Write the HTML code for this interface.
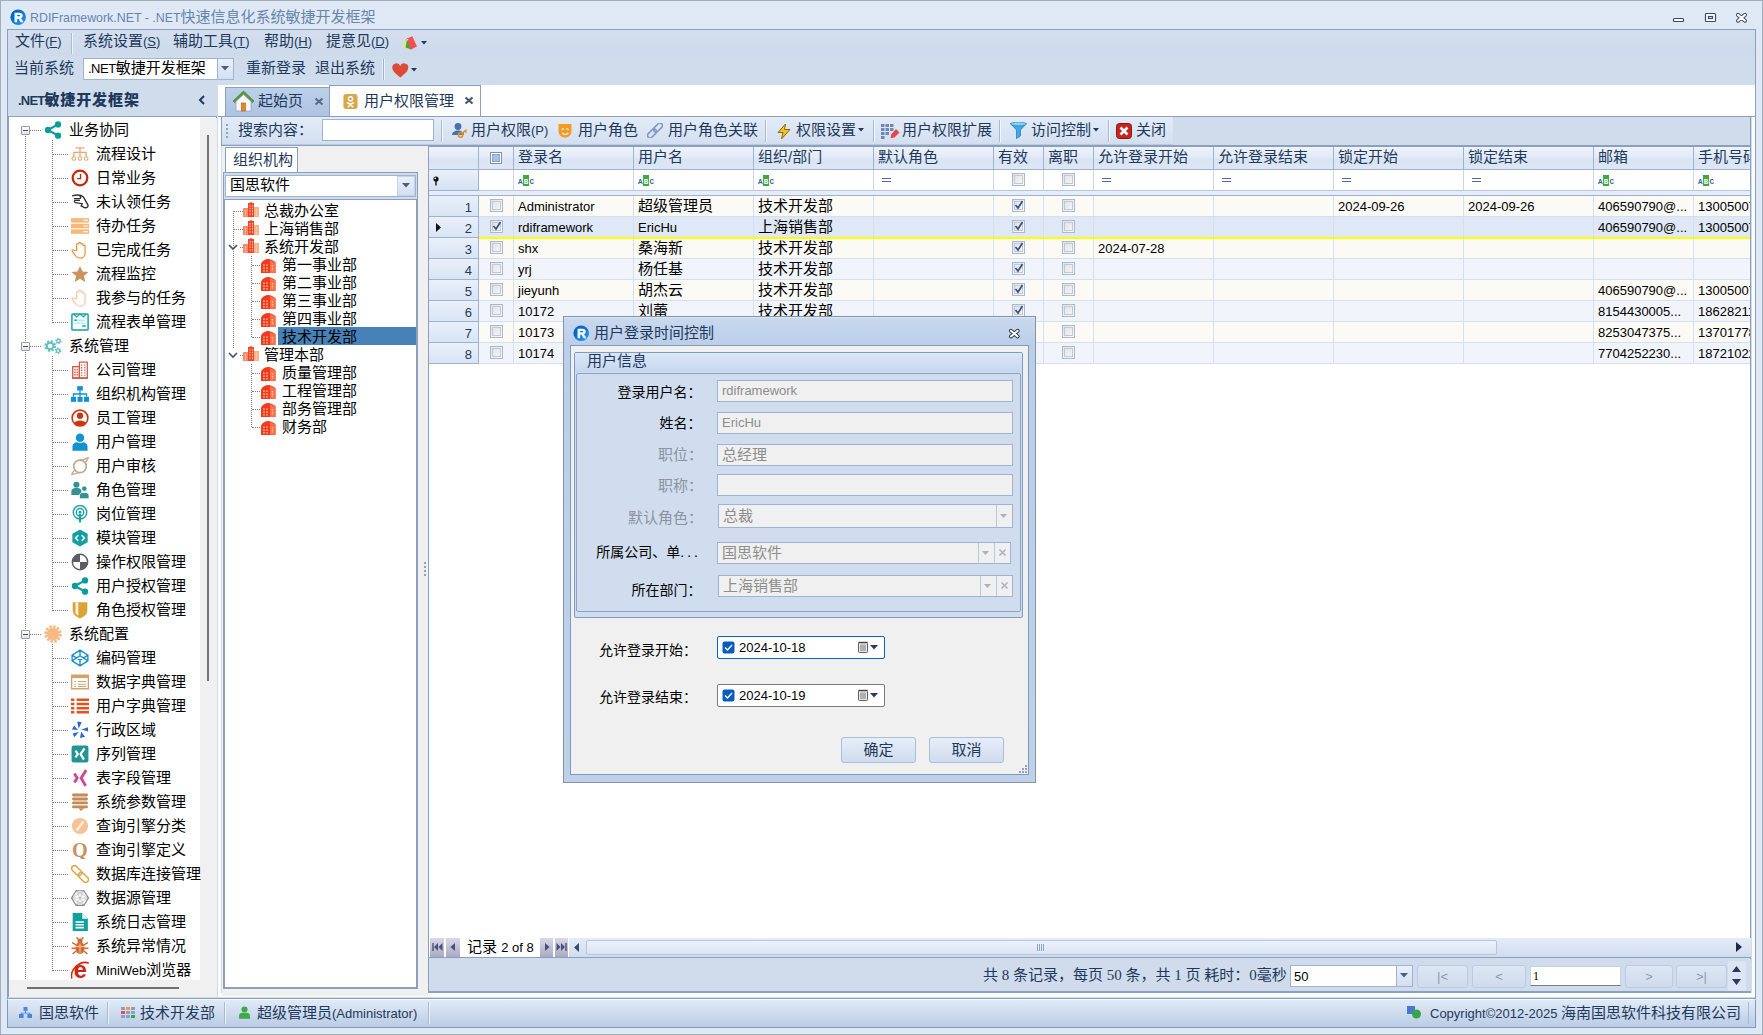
<!DOCTYPE html><html lang="zh-CN"><head><meta charset="utf-8"><title>RDIFramework.NET</title><style>
*{box-sizing:border-box;margin:0;padding:0}
html,body{width:1763px;height:1035px;overflow:hidden;background:#dfe9f5}
body{position:relative;font-family:"Liberation Sans","Noto Sans CJK SC",sans-serif;font-size:15px;color:#000;font-weight:400;line-height:1}
.a{position:absolute}
.t{position:absolute;white-space:nowrap;line-height:20px;height:20px}
.l{font-size:13px;font-weight:400}
.nv{color:#1e395b}
.ic{position:absolute;width:16px;height:16px}
.hd{position:absolute;top:1px;height:23px;border-right:1px solid #9db3d3;border-bottom:1px solid #9db3d3;background:linear-gradient(#eef3fb,#e3ebf8 45%,#d9e4f4 55%,#dde7f5);color:#1e395b;padding-left:4px;line-height:19px;white-space:nowrap;overflow:hidden}
.fc{position:absolute;top:24px;height:21px;border-right:1px solid #c9d7ea;border-bottom:1px solid #b5c7e0;background:#fff}
.c{position:absolute;height:21px;border-right:1px solid #d4dff0;border-bottom:1px solid #d4dff0;padding-left:4px;line-height:20px;white-space:nowrap;overflow:hidden}
.cb{position:absolute;width:13px;height:13px;border:1px solid #a9b9d3;background:linear-gradient(135deg,#dfe3e8,#fbfbfb);}
.cb i{position:absolute;left:1px;top:1px;width:9px;height:9px;border:1px solid #c3c9d3;background:linear-gradient(135deg,#e4e4e6,#f4f4f4)}
.dl{position:absolute;border-left:1px dotted #808080;width:0}
.dh{position:absolute;border-top:1px dotted #808080;height:0}
.inp{position:absolute;border:1px solid #9fb4d2;background:#f0f0f0;color:#8d8d8d;padding-left:4px;line-height:20px;white-space:nowrap;overflow:hidden}
.lab{position:absolute;text-align:right;white-space:nowrap;line-height:20px;height:20px}
.btn{position:absolute;border:1px solid #a9bfdc;border-radius:3px;background:linear-gradient(#e6eef9,#cfdcee);color:#1e395b;text-align:center}
</style></head><body>
<div class="a" style="left:0px;top:0px;width:1763px;height:1035px;border:1px solid #a2adbb;background:#dfe9f5"></div>
<svg class="a" style="left:9.7px;top:9px;" width="16.4" height="16.4" viewBox="0 0 16 16"><defs><linearGradient id="rg99" x1="0" y1="0" x2="1" y2="1"><stop offset="0" stop-color="#0058b0"/><stop offset=".55" stop-color="#0a78d8"/><stop offset="1" stop-color="#2aa8ff"/></linearGradient></defs><circle cx="8" cy="8" r="7.6" fill="url(#rg99)"/><text x="8.2" y="12.4" font-family="Liberation Sans,sans-serif" font-weight="700" font-size="12" fill="#fff" stroke="#fff" stroke-width=".5" text-anchor="middle">R</text></svg>
<div class="t " style="left:30px;top:7px;color:#6784ad;font-weight:400;font-size:15px"><span style="font-size:12.4px">RDIFramework.NET - .NET</span>快速信息化系统敏捷开发框架</div>
<svg class="a" style="left:1672px;top:13.5px;" width="16" height="12" viewBox="0 0 16 12"><rect x="1.5" y="4.5" width="10" height="3" rx="1" fill="#fff" stroke="#3c4a63" stroke-width="1.200"/></svg>
<svg class="a" style="left:1704px;top:12px;" width="16" height="14" viewBox="0 0 16 14"><rect x="1.5" y="1.5" width="10" height="8" rx="1" fill="#fff" stroke="#3c4a63" stroke-width="1.200"/><rect x="4.5" y="4.5" width="4" height="2" fill="#fff" stroke="#3c4a63" stroke-width="1.200"/></svg>
<svg class="a" style="left:1734px;top:11px;" width="16" height="14" viewBox="0 0 16 14"><path d="M4 3.900l7 5.800M11 3.900l-7 5.800" stroke="#3c4a63" stroke-width="4" stroke-linecap="round"/><path d="M4 3.900l7 5.800M11 3.900l-7 5.800" stroke="#fff" stroke-width="2.100" stroke-linecap="round"/></svg>
<div class="a" style="left:7px;top:29px;width:1749px;height:970px;border:1px solid #8ba0bc;background:#cfdcec"></div>
<div class="a" style="left:8px;top:30px;width:1747px;height:26px;background:linear-gradient(#d3dfee,#cddaeb)"></div>
<div class="t nv" style="left:15px;top:31px;font-weight:400">文件<span class="l">(<u>F</u>)</span></div>
<div class="t nv" style="left:83px;top:31px;font-weight:400">系统设置<span class="l">(<u>S</u>)</span></div>
<div class="t nv" style="left:173px;top:31px;font-weight:400">辅助工具<span class="l">(<u>T</u>)</span></div>
<div class="t nv" style="left:264px;top:31px;font-weight:400">帮助<span class="l">(<u>H</u>)</span></div>
<div class="t nv" style="left:326px;top:31px;font-weight:400">提意见<span class="l">(<u>D</u>)</span></div>
<div class="a" style="left:71px;top:33px;width:1px;height:21px;background:#a7b9d3"></div>
<div class="a" style="left:72px;top:33px;width:1px;height:21px;background:#eef3fa"></div>
<svg class="a" style="left:402px;top:36px;" width="16" height="14" viewBox="0 0 16 14"><path d="M4 2.500L.7 11l6.800 2.500z" fill="#e3e970"/><path d="M5.200 1.500L3.600 11.500l6.400 2.200z" fill="#3aa848"/><path d="M4.300 2.800L10.300.3l4.700 10.200-6.300 2.900z" fill="#ef5350"/><circle cx="5.600" cy="3.700" r=".7" fill="#fff"/></svg>
<svg class="a" style="left:421px;top:40.5px;" width="7" height="5" viewBox="0 0 7 5"><path d="M0 0h6L3 3.500z" fill="#1e395b"/></svg>
<div class="t nv" style="left:14px;top:58px;font-weight:400">当前系统</div>
<div class="a" style="left:83px;top:58px;width:151px;height:22px;border:1px solid #9fb4d2;background:#fff"></div>
<div class="a" style="left:217px;top:59px;width:16px;height:20px;border-left:1px solid #9fb4d2;background:linear-gradient(#e9f0fa,#d3dff0)"></div>
<svg class="a" style="left:221px;top:66px;" width="9" height="6" viewBox="0 0 9 6"><path d="M0 0h8L4 4.500z" fill="#4a5e80"/></svg>
<div class="t " style="left:88px;top:58px;color:#000;font-weight:400"><span class="l" style="letter-spacing:-.5px">.NET</span>敏捷开发框架</div>
<div class="t nv" style="left:246px;top:58px;font-weight:400">重新登录</div>
<div class="t nv" style="left:315px;top:58px;font-weight:400">退出系统</div>
<div class="a" style="left:382px;top:59px;width:1px;height:21px;background:#e6edf7"></div>
<div class="a" style="left:383px;top:59px;width:1px;height:21px;background:#9fb2cf"></div>
<div class="a" style="left:384px;top:59px;width:1px;height:21px;background:#eef3fa"></div>
<svg class="a" style="left:391.5px;top:62.5px;" width="17" height="15" viewBox="0 0 17 15"><path d="M8.300 14.500C3 10.500.3 7.800.3 4.600a4.100 4.100 0 0 1 8-1.400 4.100 4.100 0 0 1 8 1.400c0 3.200-2.700 5.900-8 9.900z" fill="#dc4a36"/></svg>
<svg class="a" style="left:410.5px;top:67.5px;" width="7" height="5" viewBox="0 0 7 5"><path d="M0 0h6L3 3.500z" fill="#1e395b"/></svg>
<div class="a" style="left:8px;top:83px;width:210px;height:915px;background:#cfdcec"></div>
<div class="t nv" style="left:18px;top:90px;font-weight:700"><b class="l" style="font-weight:700;letter-spacing:-.8px">.NET</b><b style="letter-spacing:.9px">敏捷开发框架</b></div>
<svg class="a" style="left:198px;top:95px;" width="8" height="10" viewBox="0 0 8 10"><path d="M6 1L2 5l4 4" fill="none" stroke="#1e395b" stroke-width="2"/></svg>
<div class="a" style="left:8px;top:116px;width:209px;height:881px;border:1px solid #8ba0bc;border-bottom:0;background:#fff"></div>
<div class="a" style="left:200px;top:118px;width:17px;height:862px;background:#f0f0f0"></div>
<div class="a" style="left:207px;top:135px;width:2px;height:546px;background:#757575"></div>
<div class="a" style="left:9px;top:980px;width:208px;height:17px;background:#f0f0f0"></div>
<div class="a" style="left:27px;top:987px;width:152px;height:1px;background:#707070;height:1.500px"></div>
<div class="dl" style="left:25px;top:136px;height:843px"></div>
<div class="dh" style="left:30px;top:130px;width:11px"></div>
<div class="a" style="left:21px;top:126px;width:9px;height:9px;border:1px solid #9a9a9a;border-radius:1px;background:linear-gradient(#fff,#e4e4e4)"><div class="a" style="left:1px;top:3px;width:5px;height:1px;background:#3a46b0"></div></div>
<svg class="a" style="left:44px;top:121px;" width="18" height="18" viewBox="0 0 16 16"><circle cx="3.500" cy="8" r="2.800" fill="#0c9c9c"/><circle cx="12.500" cy="3" r="2.800" fill="#0c9c9c"/><circle cx="12.500" cy="13" r="2.800" fill="#0c9c9c"/><path d="M3.500 8L12.500 3M3.500 8l9 5" stroke="#0c9c9c" stroke-width="2"/></svg>
<div class="t " style="left:69px;top:120px;">业务协同</div>
<div class="dh" style="left:53px;top:154px;width:15px"></div>
<svg class="a" style="left:71px;top:145px;" width="18" height="18" viewBox="0 0 16 16"><path d="M4 2.500h8M8 2.500v4M2.500 10V6.500h11V10M8 6.500V10" fill="none" stroke="#e3a877" stroke-width="1.200"/><circle cx="2.500" cy="12" r="1.600" fill="none" stroke="#e3a877"/><circle cx="8" cy="12" r="1.600" fill="none" stroke="#e3a877"/><circle cx="13.500" cy="12" r="1.600" fill="none" stroke="#e3a877"/></svg>
<div class="t " style="left:96px;top:144px;">流程设计</div>
<div class="dh" style="left:53px;top:178px;width:15px"></div>
<svg class="a" style="left:71px;top:169px;" width="18" height="18" viewBox="0 0 16 16"><circle cx="8" cy="8" r="6.500" fill="#fff" stroke="#c82806" stroke-width="2"/><path d="M8.500 4.500v4h-3" fill="none" stroke="#c82806" stroke-width="1.200"/></svg>
<div class="t " style="left:96px;top:168px;">日常业务</div>
<div class="dh" style="left:53px;top:202px;width:15px"></div>
<svg class="a" style="left:71px;top:193px;" width="18" height="18" viewBox="0 0 16 16"><path d="M1 2.500c4-1 8-1 10 1l4 7c.5 2-1 3-3 2.500l-3-1.500 1-2-6-1c-1.500-.5-1-2 0-2h4M2.500 5h5c1.500 0 1.500-2 0-2.200" fill="none" stroke="#303030" stroke-width="1.200"/></svg>
<div class="t " style="left:96px;top:192px;">未认领任务</div>
<div class="dh" style="left:53px;top:226px;width:15px"></div>
<svg class="a" style="left:71px;top:217px;" width="18" height="18" viewBox="0 0 16 16"><rect x="0" y="1" width="16" height="4" fill="#f9b877"/><rect x="0" y="6" width="16" height="4" fill="#f9b877"/><rect x="0" y="11" width="16" height="4" fill="#f9b877"/><path d="M11 3h4M11 8h4M11 13h4" stroke="#fff" stroke-width="1"/></svg>
<div class="t " style="left:96px;top:216px;">待办任务</div>
<div class="dh" style="left:53px;top:250px;width:15px"></div>
<svg class="a" style="left:71px;top:241px;" width="18" height="18" viewBox="0 0 16 16"><path d="M5 8.500V3.200c0-1.300 1.900-1.300 1.900 0V2.200c0-1.300 1.900-1.300 1.900 0v1c0-1.300 1.900-1.300 1.900 0v1.300c0-1.200 1.800-1.200 1.800 0V11c0 2.500-1.800 4.300-4.300 4.300-2 0-3.200-.8-4.200-2.200L1.300 9.500c-.8-1.200.7-2.200 1.700-1.200z" fill="#fff" stroke="#e8963c" stroke-width="1.100"/></svg>
<div class="t " style="left:96px;top:240px;">已完成任务</div>
<div class="dh" style="left:53px;top:274px;width:15px"></div>
<svg class="a" style="left:71px;top:265px;" width="18" height="18" viewBox="0 0 16 16"><path d="M8 .8l2.200 4.900 5.300.5-4 3.600 1.200 5.300L8 12.300 3.300 15.100l1.200-5.300-4-3.600 5.300-.5z" fill="#c9925f"/></svg>
<div class="t " style="left:96px;top:264px;">流程监控</div>
<div class="dh" style="left:53px;top:298px;width:15px"></div>
<svg class="a" style="left:71px;top:289px;" width="18" height="18" viewBox="0 0 16 16"><path d="M5 8.500V3.200c0-1.300 1.900-1.300 1.900 0V2.200c0-1.300 1.900-1.300 1.900 0v1c0-1.300 1.900-1.300 1.900 0v1.300c0-1.200 1.800-1.200 1.800 0V11c0 2.500-1.800 4.300-4.300 4.300-2 0-3.200-.8-4.200-2.200L1.300 9.500c-.8-1.200.7-2.200 1.700-1.200z" fill="#fff" stroke="#f7c9a3" stroke-width="1.100"/></svg>
<div class="t " style="left:96px;top:288px;">我参与的任务</div>
<div class="dh" style="left:53px;top:322px;width:15px"></div>
<svg class="a" style="left:71px;top:313px;" width="18" height="18" viewBox="0 0 16 16"><rect x=".8" y=".8" width="14.400" height="14.400" rx=".8" fill="#fff" stroke="#12a3a3" stroke-width="1.300"/><path d="M2.500 1l2.500 2.500L8 1l3 2.500L13.500 1" fill="none" stroke="#12a3a3" stroke-width="1"/><path d="M3 6.500h10M3 9h10" stroke="#9ff0f0" stroke-width="1.300"/><path d="M3 6.500h2M10 11.500h3" stroke="#12a3a3" stroke-width="1.300"/></svg>
<div class="t " style="left:96px;top:312px;">流程表单管理</div>
<div class="dl" style="left:52px;top:140px;height:183px"></div>
<div class="dh" style="left:30px;top:346px;width:11px"></div>
<div class="a" style="left:21px;top:342px;width:9px;height:9px;border:1px solid #9a9a9a;border-radius:1px;background:linear-gradient(#fff,#e4e4e4)"><div class="a" style="left:1px;top:3px;width:5px;height:1px;background:#3a46b0"></div></div>
<svg class="a" style="left:44px;top:337px;" width="18" height="18" viewBox="0 0 16 16"><circle cx="5.500" cy="8" r="4.300" fill="none" stroke="#5cc0c0" stroke-width="1.800" stroke-dasharray="1.900 1.480"/><circle cx="5.500" cy="8" r="2.900" fill="none" stroke="#5cc0c0" stroke-width="1.700"/><circle cx="12.800" cy="3.600" r="2.300" fill="none" stroke="#5cc0c0" stroke-width="1.200" stroke-dasharray="1.200 1.200"/><circle cx="12.800" cy="3.600" r="1.500" fill="none" stroke="#5cc0c0" stroke-width="1"/><circle cx="12.500" cy="12.300" r="2.300" fill="none" stroke="#5cc0c0" stroke-width="1.200" stroke-dasharray="1.200 1.200"/><circle cx="12.500" cy="12.300" r="1.500" fill="none" stroke="#5cc0c0" stroke-width="1"/></svg>
<div class="t " style="left:69px;top:336px;">系统管理</div>
<div class="dh" style="left:53px;top:370px;width:15px"></div>
<svg class="a" style="left:71px;top:361px;" width="18" height="18" viewBox="0 0 16 16"><rect x="1.500" y="5" width="6" height="10" fill="#fbeae6" stroke="#d35846" stroke-width="1.100"/><rect x="7.500" y="1" width="7" height="14" fill="#fff" stroke="#d35846" stroke-width="1.100"/><path d="M3.500 7v6.500M5.500 7v6.500M9.500 3v10M12.300 3v10" stroke="#d35846" stroke-width="1.100" stroke-dasharray="1.300 1"/><path d="M1 15.300h14" stroke="#d35846" stroke-width="1.200"/></svg>
<div class="t " style="left:96px;top:360px;">公司管理</div>
<div class="dh" style="left:53px;top:394px;width:15px"></div>
<svg class="a" style="left:71px;top:385px;" width="18" height="18" viewBox="0 0 16 16"><rect x="5.500" y="1" width="5" height="4" fill="#1590d2"/><rect x="0" y="10.500" width="4.500" height="4.500" fill="#1590d2"/><rect x="5.800" y="10.500" width="4.500" height="4.500" fill="#1590d2"/><rect x="11.500" y="10.500" width="4.500" height="4.500" fill="#1590d2"/><path d="M8 5v5.500M2.200 10.500V8h11.600v2.500" fill="none" stroke="#1590d2" stroke-width="1.200"/></svg>
<div class="t " style="left:96px;top:384px;">组织机构管理</div>
<div class="dh" style="left:53px;top:418px;width:15px"></div>
<svg class="a" style="left:71px;top:409px;" width="18" height="18" viewBox="0 0 16 16"><circle cx="8" cy="8" r="7" fill="#fff" stroke="#cc3412" stroke-width="1.400"/><circle cx="8" cy="6" r="2.800" fill="#cc3412"/><path d="M2.800 12.500c1-3 9.400-3 10.400 0-2.500 3-8 3-10.400 0z" fill="#cc3412"/></svg>
<div class="t " style="left:96px;top:408px;">员工管理</div>
<div class="dh" style="left:53px;top:442px;width:15px"></div>
<svg class="a" style="left:71px;top:433px;" width="18" height="18" viewBox="0 0 16 16"><circle cx="8" cy="4.300" r="3.800" fill="#1292d0"/><path d="M1.300 15.800V12c0-2.300 1.800-3.800 4.200-3.800.8.800 4.200.8 5 0 2.400 0 4.200 1.500 4.200 3.800v3.800z" fill="#1292d0"/></svg>
<div class="t " style="left:96px;top:432px;">用户管理</div>
<div class="dh" style="left:53px;top:466px;width:15px"></div>
<svg class="a" style="left:71px;top:457px;" width="18" height="18" viewBox="0 0 16 16"><circle cx="8" cy="8.300" r="5.600" fill="none" stroke="#c3aa92" stroke-width="1.500"/><path d="M8 2.700C11 2.500 13.500 1.500 15.500.3c-.8 2-1.500 3.500-2.600 4.600M8 13.900c-3 .2-5.500 1.200-7.500 2.100.8-1.800 1.500-3 2.600-4.200" fill="none" stroke="#c3aa92" stroke-width="1.200"/></svg>
<div class="t " style="left:96px;top:456px;">用户审核</div>
<div class="dh" style="left:53px;top:490px;width:15px"></div>
<svg class="a" style="left:71px;top:481px;" width="18" height="18" viewBox="0 0 16 16"><circle cx="4.800" cy="3.300" r="2.700" fill="#339393"/><path d="M.3 12.500V9.500c0-2 1.500-3.200 3.300-3.200h2.400c1.800 0 3.300 1.200 3.300 3.200v3z" fill="#339393"/><circle cx="11.800" cy="6.800" r="2.400" fill="#339393" stroke="#fff" stroke-width=".7"/><path d="M7.500 15.800v-2.600c0-1.900 1.300-3 3-3h2.500c1.700 0 3 1.100 3 3v2.600z" fill="#339393" stroke="#fff" stroke-width=".7"/></svg>
<div class="t " style="left:96px;top:480px;">角色管理</div>
<div class="dh" style="left:53px;top:514px;width:15px"></div>
<svg class="a" style="left:71px;top:505px;" width="18" height="18" viewBox="0 0 16 16"><circle cx="8" cy="6.500" r="6" fill="none" stroke="#1fa2a2" stroke-width="1.300"/><circle cx="8" cy="6.500" r="3.300" fill="none" stroke="#1fa2a2" stroke-width="1.300"/><circle cx="8" cy="6.500" r="1.300" fill="#1fa2a2"/><path d="M8 8v7.500" stroke="#1fa2a2" stroke-width="2"/></svg>
<div class="t " style="left:96px;top:504px;">岗位管理</div>
<div class="dh" style="left:53px;top:538px;width:15px"></div>
<svg class="a" style="left:71px;top:529px;" width="18" height="18" viewBox="0 0 16 16"><path d="M8 .5l6.800 3.700v7.600L8 15.500 1.200 11.800V4.200z" fill="#10a0a0"/><path d="M6.500 5.500L4 8l2.500 2.500M9.500 5.500L12 8l-2.500 2.500" fill="none" stroke="#fff" stroke-width="1.300"/></svg>
<div class="t " style="left:96px;top:528px;">模块管理</div>
<div class="dh" style="left:53px;top:562px;width:15px"></div>
<svg class="a" style="left:71px;top:553px;" width="18" height="18" viewBox="0 0 16 16"><circle cx="8" cy="8" r="6.800" fill="#fff" stroke="#5d5d66" stroke-width="1.300"/><path d="M8 1.200A6.800 6.800 0 0 0 1.200 8H8zM8 14.800A6.800 6.800 0 0 0 14.800 8H8z" fill="#5d5d66"/></svg>
<div class="t " style="left:96px;top:552px;">操作权限管理</div>
<div class="dh" style="left:53px;top:586px;width:15px"></div>
<svg class="a" style="left:71px;top:577px;" width="18" height="18" viewBox="0 0 16 16"><circle cx="3.500" cy="8" r="2.800" fill="#0c9c9c"/><circle cx="12.500" cy="3" r="2.800" fill="#0c9c9c"/><circle cx="12.500" cy="13" r="2.800" fill="#0c9c9c"/><path d="M3.500 8L12.500 3M3.500 8l9 5" stroke="#0c9c9c" stroke-width="2"/></svg>
<div class="t " style="left:96px;top:576px;">用户授权管理</div>
<div class="dh" style="left:53px;top:610px;width:15px"></div>
<svg class="a" style="left:71px;top:601px;" width="18" height="18" viewBox="0 0 16 16"><path d="M1.500 1h13v7c0 4-3 6-6.500 7.500C4.500 14 1.500 12 1.500 8z" fill="#d9a336"/><path d="M4 1h2.500v12L4 11z" fill="#fff" opacity=".85"/></svg>
<div class="t " style="left:96px;top:600px;">角色授权管理</div>
<div class="dl" style="left:52px;top:356px;height:255px"></div>
<div class="dh" style="left:30px;top:634px;width:11px"></div>
<div class="a" style="left:21px;top:630px;width:9px;height:9px;border:1px solid #9a9a9a;border-radius:1px;background:linear-gradient(#fff,#e4e4e4)"><div class="a" style="left:1px;top:3px;width:5px;height:1px;background:#3a46b0"></div></div>
<svg class="a" style="left:44px;top:625px;" width="18" height="18" viewBox="0 0 16 16"><circle cx="8" cy="8" r="5.500" fill="#f9b985"/><circle cx="8" cy="8" r="6.500" fill="none" stroke="#f9b985" stroke-width="2.600" stroke-dasharray="2.200 1.200"/></svg>
<div class="t " style="left:69px;top:624px;">系统配置</div>
<div class="dh" style="left:53px;top:658px;width:15px"></div>
<svg class="a" style="left:71px;top:649px;" width="18" height="18" viewBox="0 0 16 16"><path d="M8 1L15 5.500v5L8 15 1 10.500v-5zM1 5.500l7 4.500 7-4.500M1 10.500L8 6l7 4.500M8 1v5M8 10v5" fill="none" stroke="#1590d2" stroke-width="1.200"/></svg>
<div class="t " style="left:96px;top:648px;">编码管理</div>
<div class="dh" style="left:53px;top:682px;width:15px"></div>
<svg class="a" style="left:71px;top:673px;" width="18" height="18" viewBox="0 0 16 16"><rect x=".5" y="2" width="15" height="12" fill="#fff" stroke="#d3a36f" stroke-width="1.300"/><rect x=".5" y="2" width="15" height="2.500" fill="#d3a36f"/><path d="M3 7.500h1.500M6 7.500h7.500M3 10h1.500M6 10h7.500M3 12h1.500M6 12h7.500" stroke="#d3a36f" stroke-width="1"/></svg>
<div class="t " style="left:96px;top:672px;">数据字典管理</div>
<div class="dh" style="left:53px;top:706px;width:15px"></div>
<svg class="a" style="left:71px;top:697px;" width="18" height="18" viewBox="0 0 16 16"><path d="M0 2.500h3M5 2.500h11M0 6.200h3M5 6.200h11M0 9.900h3M5 9.900h11M0 13.600h3M5 13.600h11" stroke="#e25320" stroke-width="2.200"/></svg>
<div class="t " style="left:96px;top:696px;">用户字典管理</div>
<div class="dh" style="left:53px;top:730px;width:15px"></div>
<svg class="a" style="left:71px;top:721px;" width="18" height="18" viewBox="0 0 16 16"><g fill="#2f63d3"><path d="M6.800 6.800L5.500.5l4 .5z"/><path d="M9.300 7.500l5.700-2 .3 3.800z"/><path d="M9 9.500l3.500 4.500-4.500 1z"/><path d="M7 9.800L3 14.500l-1.500-3.500z"/><path d="M6.300 8L.8 7.500l2-3.500z"/></g></svg>
<div class="t " style="left:96px;top:720px;">行政区域</div>
<div class="dh" style="left:53px;top:754px;width:15px"></div>
<svg class="a" style="left:71px;top:745px;" width="18" height="18" viewBox="0 0 16 16"><rect x=".5" y=".5" width="15" height="15" rx="2" fill="#239393"/><path d="M4 5l2 3-2 3M12 3L8.500 8l3 5" fill="none" stroke="#fff" stroke-width="2"/></svg>
<div class="t " style="left:96px;top:744px;">序列管理</div>
<div class="dh" style="left:53px;top:778px;width:15px"></div>
<svg class="a" style="left:71px;top:769px;" width="18" height="18" viewBox="0 0 16 16"><path d="M3 4l2.500 4L3 12M13.500 1L9 8l4 7" fill="none" stroke="#cc4a92" stroke-width="2.600"/></svg>
<div class="t " style="left:96px;top:768px;">表字段管理</div>
<div class="dh" style="left:53px;top:802px;width:15px"></div>
<svg class="a" style="left:71px;top:793px;" width="18" height="18" viewBox="0 0 16 16"><rect x="1" y=".5" width="14" height="2.600" rx="1" fill="#c38b55"/><rect x="1" y="4" width="14" height="2.600" rx="1" fill="#c38b55"/><rect x="1" y="7.500" width="14" height="2.600" rx="1" fill="#c38b55"/><rect x="1" y="11" width="14" height="2.600" rx="1" fill="#c38b55"/><path d="M7 13.500h5l-3.500 2.500z" fill="#c38b55"/></svg>
<div class="t " style="left:96px;top:792px;">系统参数管理</div>
<div class="dh" style="left:53px;top:826px;width:15px"></div>
<svg class="a" style="left:71px;top:817px;" width="18" height="18" viewBox="0 0 16 16"><circle cx="8" cy="8" r="7.200" fill="#f9c296"/><path d="M5 12l6-8" stroke="#fff" stroke-width="2" opacity=".8"/></svg>
<div class="t " style="left:96px;top:816px;">查询引擎分类</div>
<div class="dh" style="left:53px;top:850px;width:15px"></div>
<svg class="a" style="left:71px;top:841px;" width="18" height="18" viewBox="0 0 16 16"><text x="8" y="14" font-family="Liberation Serif,serif" font-weight="700" font-size="18" fill="#c9925f" text-anchor="middle">Q</text></svg>
<div class="t " style="left:96px;top:840px;">查询引擎定义</div>
<div class="dh" style="left:53px;top:874px;width:15px"></div>
<svg class="a" style="left:71px;top:865px;" width="18" height="18" viewBox="0 0 16 16"><g transform="rotate(45 8 8)" fill="none" stroke="#e2a344" stroke-width="1.300"><rect x="-1.500" y="5.500" width="10.500" height="5" rx="2.500"/><rect x="7" y="5.500" width="10.500" height="5" rx="2.500"/></g></svg>
<div class="t " style="left:96px;top:864px;">数据库连接管理</div>
<div class="dh" style="left:53px;top:898px;width:15px"></div>
<svg class="a" style="left:71px;top:889px;" width="18" height="18" viewBox="0 0 16 16"><path d="M4.500 1.500h7L15.500 8l-4 6.500h-7L.5 8z" fill="#fff" stroke="#8a8a8a" stroke-width="1"/><path d="M4.500 1.500l7 13M11.500 1.500l-7 13M.5 8h15M4.500 1.500L15.500 8M11.500 1.500L.5 8M.5 8l11 6.500M15.500 8l-11 6.500" stroke="#8a8a8a" stroke-width=".4"/></svg>
<div class="t " style="left:96px;top:888px;">数据源管理</div>
<div class="dh" style="left:53px;top:922px;width:15px"></div>
<svg class="a" style="left:71px;top:913px;" width="18" height="18" viewBox="0 0 16 16"><path d="M1.500 0H10l5 5v11H1.500z" fill="#10a0a0"/><path d="M10 0v5h5z" fill="#fff" opacity=".9"/><path d="M4 8h7.500M4 10.500h7.500M4 13h7.500" stroke="#fff" stroke-width="1.400"/></svg>
<div class="t " style="left:96px;top:912px;">系统日志管理</div>
<div class="dh" style="left:53px;top:946px;width:15px"></div>
<svg class="a" style="left:71px;top:937px;" width="18" height="18" viewBox="0 0 16 16"><ellipse cx="8" cy="9.800" rx="4.200" ry="5.400" fill="#d46a30"/><circle cx="8" cy="3.600" r="2.300" fill="#d46a30"/><path d="M4.500 7L1 5M4 10H.5M4.500 12.500L1.500 15M11.500 7L15 5M12 10h3.500M11.500 12.500l3 2.500M6.500 2L5 .3M9.500 2L11 .3" stroke="#d46a30" stroke-width="1.300"/><path d="M8 5.800v9M3.800 8.500h8.400" stroke="#fff" stroke-width=".7" opacity=".8"/></svg>
<div class="t " style="left:96px;top:936px;">系统异常情况</div>
<div class="dh" style="left:53px;top:970px;width:15px"></div>
<svg class="a" style="left:71px;top:961px;" width="18" height="18" viewBox="0 0 16 16"><text x="8.300" y="15" font-family="Liberation Sans,sans-serif" font-weight="700" font-size="21" fill="#d2230f" text-anchor="middle">e</text><path d="M.8 15.500C-1.500 8 8-1 15.800 1.800" fill="none" stroke="#d2230f" stroke-width="1.400"/></svg>
<div class="t " style="left:96px;top:960px;"><span class="l">MiniWeb</span>浏览器</div>
<div class="dl" style="left:52px;top:644px;height:327px"></div>
<div class="a" style="left:7px;top:999px;width:1749px;height:29px;background:linear-gradient(#e0eaf7 0%,#d2dff0 40%,#c3d3e9 75%,#bccee6 100%);border:1px solid #7f97ba;border-top:1px solid #f4f8fd"></div>
<div class="a" style="left:7px;top:998px;width:1749px;height:1px;background:#8ba0bc"></div>
<div class="a" style="left:107px;top:1002px;width:1px;height:22px;background:#a7b9d3"></div>
<div class="a" style="left:108px;top:1002px;width:1px;height:22px;background:#eef3fa"></div>
<div class="a" style="left:224px;top:1002px;width:1px;height:22px;background:#a7b9d3"></div>
<div class="a" style="left:225px;top:1002px;width:1px;height:22px;background:#eef3fa"></div>
<div class="a" style="left:428px;top:1002px;width:1px;height:22px;background:#a7b9d3"></div>
<div class="a" style="left:429px;top:1002px;width:1px;height:22px;background:#eef3fa"></div>
<svg class="a" style="left:19px;top:1007px;" width="13" height="11" viewBox="0 0 13 11"><g fill="#4a84d8"><rect x="4.500" y="0" width="4" height="3.800"/><rect x="0" y="7" width="4.600" height="4"/><rect x="8.400" y="7" width="4.600" height="4"/><path d="M6 3.500h1v2.300h4.200V7h-1V6.600H2.800V7h-1V5.800H6z"/></g></svg>
<div class="t nv" style="left:39px;top:1003px;font-weight:400">国思软件</div>
<svg class="a" style="left:120.5px;top:1007px;" width="15" height="12" viewBox="0 0 15 12"><rect x="0" y="0" width="4" height="3" fill="#8e9fc4"/><rect x="5" y="0" width="4" height="3" fill="#f0a030"/><rect x="10" y="0" width="4" height="3" fill="#8e9fc4"/><rect x="0" y="4" width="4" height="3" fill="#e84a5a"/><rect x="5" y="4" width="4" height="3" fill="#8e9fc4"/><rect x="10" y="4" width="4" height="3" fill="#8e9fc4"/><rect x="0" y="8" width="4" height="3" fill="#8e9fc4"/><rect x="5" y="8" width="4" height="3" fill="#8e9fc4"/><rect x="10" y="8" width="4" height="3" fill="#3aa648"/></svg>
<div class="t nv" style="left:140px;top:1003px;font-weight:400">技术开发部</div>
<svg class="a" style="left:238px;top:1006px;" width="13" height="13" viewBox="0 0 16 16"><circle cx="8" cy="4.300" r="3.800" fill="#3fa84a"/><path d="M1.300 15.800V12c0-2.300 1.800-3.800 4.200-3.800.8.800 4.200.8 5 0 2.400 0 4.200 1.500 4.200 3.800v3.800z" fill="#3fa84a"/></svg>
<div class="t nv" style="left:257px;top:1003px;font-weight:400">超级管理员<span class="l">(Administrator)</span></div>
<svg class="a" style="left:1406px;top:1005px;" width="16" height="14" viewBox="0 0 16 14"><rect x="1" y="1" width="8" height="8" fill="#4a78d0"/><circle cx="10.500" cy="9" r="4.500" fill="#36a546"/></svg>
<div class="t nv" style="left:1430px;top:1003px;font-weight:400"><span class="l">Copyright©2012-2025 </span>海南国思软件科技有限公司</div>
<div class="a" style="left:1748px;top:1002px;width:1px;height:22px;background:#a7b9d3"></div>
<div class="a" style="left:218px;top:85px;width:1537px;height:912px;background:#fff"></div>
<div class="a" style="left:225px;top:87px;width:105px;height:30px;border:1px solid #8ba0bc;border-bottom:0;background:linear-gradient(#bcd0e9,#adc3e1)"></div>
<svg class="a" style="left:232px;top:90px;" width="23" height="22" viewBox="0 0 23 22"><path d="M11.500 1L1 11l1.800 1.800L11.500 4.500l8.700 8.300L22 11z" fill="#5a9a34" stroke="#3f7a22" stroke-width=".6"/><path d="M4 11.500l7.500-7 7.500 7V21H4z" fill="#f7f8fe" stroke="#9aa0d8" stroke-width=".8"/><rect x="9.500" y="13" width="4" height="8" fill="#e58a1e" stroke="#a85f10" stroke-width=".6"/></svg>
<div class="t nv" style="left:258px;top:91px;font-weight:400">起始页</div>
<svg class="a" style="left:314px;top:97px;" width="11" height="9" viewBox="0 0 11 9"><path d="M1.500 1.500l7 6M8.500 1.500l-7 6" stroke="#5f6c88" stroke-width="2.200"/></svg>
<div class="a" style="left:329px;top:85px;width:152px;height:32px;border:1px solid #8ba0bc;border-bottom:0;background:#fff"></div>
<svg class="a" style="left:342.5px;top:93.5px;" width="15" height="15" viewBox="0 0 16 17"><rect x="0" y="0" width="16" height="17" rx="3" fill="#d9a648"/><circle cx="8" cy="5.500" r="2.400" fill="none" stroke="#fff" stroke-width="1.500"/><path d="M4 9.500c2.500 2 5.500 2 8 0M8 11v1l-3 3M8 12l3 3" fill="none" stroke="#fff" stroke-width="1.500"/></svg>
<div class="t " style="left:364px;top:91px;font-weight:400;color:#1e395b">用户权限管理</div>
<svg class="a" style="left:464px;top:96px;" width="11" height="9" viewBox="0 0 11 9"><path d="M1.500 1.500l7 6M8.500 1.500l-7 6" stroke="#47566f" stroke-width="2.200"/></svg>
<div class="a" style="left:218px;top:116px;width:1537px;height:881px;background:#fbfcfe;border-top:1px solid #8ba0bc"></div>
<div class="a" style="left:221px;top:117px;width:1531px;height:876px;background:#cfdcec"></div>
<div class="a" style="left:482px;top:116px;width:1273px;height:1px;background:#8ba0bc"></div>
<div class="a" style="left:221px;top:117px;width:1530px;height:29px;background:#d0dcec;border:1px solid #8ba0bc;border-top:0"></div>
<div class="a" style="left:222px;top:117px;width:951px;height:28px;background:linear-gradient(#e3ecf8,#d3dff0);border-bottom:1px solid #b9c9e0"></div>
<div class="a" style="left:226px;top:124px;width:2px;height:2px;background:#8fa3c2"></div>
<div class="a" style="left:226px;top:128px;width:2px;height:2px;background:#8fa3c2"></div>
<div class="a" style="left:226px;top:132px;width:2px;height:2px;background:#8fa3c2"></div>
<div class="a" style="left:226px;top:136px;width:2px;height:2px;background:#8fa3c2"></div>
<div class="t nv" style="left:238px;top:120px;font-weight:400">搜索内容：</div>
<div class="a" style="left:322px;top:119px;width:112px;height:22px;border:1px solid #9fb4d2;background:#fff"></div>
<div class="a" style="left:441px;top:120px;width:1px;height:22px;background:#a7b9d3"></div>
<div class="a" style="left:442px;top:120px;width:1px;height:22px;background:#f3f7fc"></div>
<svg class="a" style="left:451px;top:122px;" width="17" height="17" viewBox="0 0 17 17"><circle cx="7" cy="4.500" r="3.400" fill="#4a6fb0"/><path d="M1 13c0-6 12-6 12 0z" fill="#4a6fb0"/><circle cx="9.500" cy="13" r="2.200" fill="none" stroke="#e89020" stroke-width="1.600"/><path d="M11 11.500l4.500-4M14 9l1.500 1.500" stroke="#e89020" stroke-width="1.500" fill="none"/></svg>
<div class="t nv" style="left:471px;top:120px;font-weight:400">用户权限<span class="l">(P)</span></div>
<svg class="a" style="left:558px;top:123px;" width="14" height="15" viewBox="0 0 14 15"><path d="M.5 1h13v7c0 4-3 6.500-6.500 6.500S.5 12 .5 8z" fill="#f59a23"/><path d="M3.500 6.500c.8-1 1.800-1 2.600 0M8 6.500c.8-1 1.800-1 2.600 0M4 10c2 1.800 4.500 1.800 6.200 0" fill="none" stroke="#fff" stroke-width="1.100"/></svg>
<div class="t nv" style="left:578px;top:120px;font-weight:400">用户角色</div>
<svg class="a" style="left:647px;top:123px;" width="16" height="15" viewBox="0 0 16 15"><g transform="rotate(-45 8 7.500)" fill="none" stroke="#7f97c2" stroke-width="1.600"><rect x="-1.500" y="5" width="10.500" height="5" rx="2.500"/><rect x="7" y="5" width="10.500" height="5" rx="2.500"/></g></svg>
<div class="t nv" style="left:668px;top:120px;font-weight:400">用户角色关联</div>
<div class="a" style="left:765px;top:120px;width:1px;height:22px;background:#a7b9d3"></div>
<div class="a" style="left:766px;top:120px;width:1px;height:22px;background:#f3f7fc"></div>
<svg class="a" style="left:776px;top:123px;" width="16" height="17" viewBox="0 0 16 17"><path d="M9.500 1L2 9.500h5L5.500 16 14 6.500H8.500z" fill="#f9c31a" stroke="#8a6a10" stroke-width="1"/></svg>
<div class="t nv" style="left:796px;top:120px;font-weight:400">权限设置</div>
<svg class="a" style="left:858px;top:128px;" width="7" height="5" viewBox="0 0 7 5"><path d="M0 0h6L3 3.500z" fill="#1e395b"/></svg>
<div class="a" style="left:873px;top:120px;width:1px;height:22px;background:#a7b9d3"></div>
<div class="a" style="left:874px;top:120px;width:1px;height:22px;background:#f3f7fc"></div>
<svg class="a" style="left:881px;top:124px;" width="19" height="15" viewBox="0 0 19 15"><g fill="#6f86b8"><rect x="0" y="0" width="3.500" height="3"/><rect x="4.500" y="0" width="3.500" height="3"/><rect x="9" y="0" width="3.500" height="3"/><rect x="0" y="4" width="3.500" height="3"/><rect x="4.500" y="4" width="3.500" height="3"/><rect x="9" y="4" width="3.500" height="3"/><rect x="0" y="8" width="3.500" height="3"/><rect x="4.500" y="8" width="3.500" height="3"/><rect x="0" y="12" width="3.500" height="3"/></g><path d="M15 5l3.500 3.500-5 5-4 .8.800-4z" fill="#e04a4a"/></svg>
<div class="t nv" style="left:902px;top:120px;font-weight:400">用户权限扩展</div>
<div class="a" style="left:999px;top:120px;width:1px;height:22px;background:#a7b9d3"></div>
<div class="a" style="left:1000px;top:120px;width:1px;height:22px;background:#f3f7fc"></div>
<svg class="a" style="left:1010px;top:122px;" width="17" height="17" viewBox="0 0 17 17"><path d="M.5 1.500h16L10.500 8v6l-4 2.500V8z" fill="#3fa9e6" stroke="#2680c0" stroke-width=".8"/><ellipse cx="8.500" cy="2" rx="8" ry="1.800" fill="#8fd0f5" stroke="#2680c0" stroke-width=".7"/></svg>
<div class="t nv" style="left:1031px;top:120px;font-weight:400">访问控制</div>
<svg class="a" style="left:1093px;top:128px;" width="7" height="5" viewBox="0 0 7 5"><path d="M0 0h6L3 3.500z" fill="#1e395b"/></svg>
<div class="a" style="left:1108px;top:120px;width:1px;height:22px;background:#a7b9d3"></div>
<div class="a" style="left:1109px;top:120px;width:1px;height:22px;background:#f3f7fc"></div>
<svg class="a" style="left:1116px;top:123px;" width="16" height="16" viewBox="0 0 16 16"><rect x=".5" y=".5" width="15" height="15" rx="3" fill="#c8241c" stroke="#8a1610"/><path d="M4.500 4.500l7 7M11.500 4.500l-7 7" stroke="#fff" stroke-width="2.600"/></svg>
<div class="t nv" style="left:1136px;top:120px;font-weight:400">关闭</div>
<div class="a" style="left:222px;top:146px;width:206px;height:850px;background:#f0f0f0"></div>
<div class="a" style="left:225px;top:147px;width:73px;height:26px;border:1px solid #8ba0bc;border-bottom:0;background:#fff"></div>
<div class="t nv" style="left:233px;top:150px;font-weight:400">组织机构</div>
<div class="a" style="left:223px;top:172px;width:195px;height:28px;border:1px solid #8ba0bc;background:#cfdcec"></div>
<div class="a" style="left:225px;top:175px;width:191px;height:22px;border:1px solid #9fb4d2;background:#fff"></div>
<div class="a" style="left:397px;top:176px;width:18px;height:20px;border:1px solid #c4d2e6;background:linear-gradient(#eaf0fa,#d3dff0)"></div>
<svg class="a" style="left:402px;top:183px;" width="9" height="6" viewBox="0 0 9 6"><path d="M0 0h8L4 4.500z" fill="#4a5e80"/></svg>
<div class="t " style="left:230px;top:175px;font-weight:400">国思软件</div>
<div class="a" style="left:223px;top:199px;width:195px;height:790px;border:2px solid #8ba0bc;border-top:1px solid #8ba0bc;background:#fff"></div>
<div class="dh" style="left:234px;top:211px;width:9px"></div>
<svg class="a" style="left:243px;top:202px;" width="16" height="16" viewBox="0 0 16 16"><rect x="5" y="1" width="6" height="14" fill="#f0452a"/><rect x="0" y="6" width="5" height="9" fill="#f98a6a"/><rect x="11" y="5" width="5" height="10" fill="#fbb48a"/><path d="M7 3v11M9.500 3v11M2.500 8v6M13.500 7v7" stroke="#ffd9b0" stroke-width="1" stroke-dasharray="1.500 1.200"/><path d="M8 0v1.500" stroke="#f0452a" stroke-width="1.500"/></svg>
<div class="t " style="left:264px;top:201px;font-weight:400">总裁办公室</div>
<div class="dh" style="left:234px;top:229px;width:9px"></div>
<svg class="a" style="left:243px;top:220px;" width="16" height="16" viewBox="0 0 16 16"><rect x="5" y="1" width="6" height="14" fill="#f0452a"/><rect x="0" y="6" width="5" height="9" fill="#f98a6a"/><rect x="11" y="5" width="5" height="10" fill="#fbb48a"/><path d="M7 3v11M9.500 3v11M2.500 8v6M13.500 7v7" stroke="#ffd9b0" stroke-width="1" stroke-dasharray="1.500 1.200"/><path d="M8 0v1.500" stroke="#f0452a" stroke-width="1.500"/></svg>
<div class="t " style="left:264px;top:219px;font-weight:400">上海销售部</div>
<svg class="a" style="left:228px;top:244px;" width="10" height="7" viewBox="0 0 10 7"><path d="M1 1l4 4 4-4" fill="none" stroke="#44506a" stroke-width="1.600"/></svg>
<div class="dh" style="left:240px;top:247px;width:3px"></div>
<svg class="a" style="left:243px;top:238px;" width="16" height="16" viewBox="0 0 16 16"><rect x="5" y="1" width="6" height="14" fill="#f0452a"/><rect x="0" y="6" width="5" height="9" fill="#f98a6a"/><rect x="11" y="5" width="5" height="10" fill="#fbb48a"/><path d="M7 3v11M9.500 3v11M2.500 8v6M13.500 7v7" stroke="#ffd9b0" stroke-width="1" stroke-dasharray="1.500 1.200"/><path d="M8 0v1.500" stroke="#f0452a" stroke-width="1.500"/></svg>
<div class="t " style="left:264px;top:237px;font-weight:400">系统开发部</div>
<div class="dh" style="left:252px;top:265px;width:8px"></div>
<svg class="a" style="left:260px;top:257px;" width="16" height="16" viewBox="0 0 16 16"><path d="M1 6.500C3 2.500 8 1 12 3l3.500 2V16H1z" fill="#f4391f"/><path d="M10 3l5.500 2.500V16H10z" fill="#f9704a"/><path d="M4 7.500v7M7 7.500v7M12.500 8v6" stroke="#ffc9a0" stroke-width="1.400" stroke-dasharray="1.600 1.200"/></svg>
<div class="t " style="left:282px;top:255px;font-weight:400">第一事业部</div>
<div class="dh" style="left:252px;top:283px;width:8px"></div>
<svg class="a" style="left:260px;top:275px;" width="16" height="16" viewBox="0 0 16 16"><path d="M1 6.500C3 2.500 8 1 12 3l3.500 2V16H1z" fill="#f4391f"/><path d="M10 3l5.500 2.500V16H10z" fill="#f9704a"/><path d="M4 7.500v7M7 7.500v7M12.500 8v6" stroke="#ffc9a0" stroke-width="1.400" stroke-dasharray="1.600 1.200"/></svg>
<div class="t " style="left:282px;top:273px;font-weight:400">第二事业部</div>
<div class="dh" style="left:252px;top:301px;width:8px"></div>
<svg class="a" style="left:260px;top:293px;" width="16" height="16" viewBox="0 0 16 16"><path d="M1 6.500C3 2.500 8 1 12 3l3.500 2V16H1z" fill="#f4391f"/><path d="M10 3l5.500 2.500V16H10z" fill="#f9704a"/><path d="M4 7.500v7M7 7.500v7M12.500 8v6" stroke="#ffc9a0" stroke-width="1.400" stroke-dasharray="1.600 1.200"/></svg>
<div class="t " style="left:282px;top:291px;font-weight:400">第三事业部</div>
<div class="dh" style="left:252px;top:319px;width:8px"></div>
<svg class="a" style="left:260px;top:311px;" width="16" height="16" viewBox="0 0 16 16"><path d="M1 6.500C3 2.500 8 1 12 3l3.500 2V16H1z" fill="#f4391f"/><path d="M10 3l5.500 2.500V16H10z" fill="#f9704a"/><path d="M4 7.500v7M7 7.500v7M12.500 8v6" stroke="#ffc9a0" stroke-width="1.400" stroke-dasharray="1.600 1.200"/></svg>
<div class="t " style="left:282px;top:309px;font-weight:400">第四事业部</div>
<div class="dh" style="left:252px;top:337px;width:8px"></div>
<svg class="a" style="left:260px;top:329px;" width="16" height="16" viewBox="0 0 16 16"><path d="M1 6.500C3 2.500 8 1 12 3l3.500 2V16H1z" fill="#f4391f"/><path d="M10 3l5.500 2.500V16H10z" fill="#f9704a"/><path d="M4 7.500v7M7 7.500v7M12.500 8v6" stroke="#ffc9a0" stroke-width="1.400" stroke-dasharray="1.600 1.200"/></svg>
<div class="a" style="left:278px;top:327px;width:138px;height:18px;background:#4682b8"></div>
<div class="t " style="left:282px;top:327px;font-weight:400">技术开发部</div>
<svg class="a" style="left:228px;top:352px;" width="10" height="7" viewBox="0 0 10 7"><path d="M1 1l4 4 4-4" fill="none" stroke="#44506a" stroke-width="1.600"/></svg>
<div class="dh" style="left:240px;top:355px;width:3px"></div>
<svg class="a" style="left:243px;top:346px;" width="16" height="16" viewBox="0 0 16 16"><rect x="5" y="1" width="6" height="14" fill="#f0452a"/><rect x="0" y="6" width="5" height="9" fill="#f98a6a"/><rect x="11" y="5" width="5" height="10" fill="#fbb48a"/><path d="M7 3v11M9.500 3v11M2.500 8v6M13.500 7v7" stroke="#ffd9b0" stroke-width="1" stroke-dasharray="1.500 1.200"/><path d="M8 0v1.500" stroke="#f0452a" stroke-width="1.500"/></svg>
<div class="t " style="left:264px;top:345px;font-weight:400">管理本部</div>
<div class="dh" style="left:252px;top:373px;width:8px"></div>
<svg class="a" style="left:260px;top:365px;" width="16" height="16" viewBox="0 0 16 16"><path d="M1 6.500C3 2.500 8 1 12 3l3.500 2V16H1z" fill="#f4391f"/><path d="M10 3l5.500 2.500V16H10z" fill="#f9704a"/><path d="M4 7.500v7M7 7.500v7M12.500 8v6" stroke="#ffc9a0" stroke-width="1.400" stroke-dasharray="1.600 1.200"/></svg>
<div class="t " style="left:282px;top:363px;font-weight:400">质量管理部</div>
<div class="dh" style="left:252px;top:391px;width:8px"></div>
<svg class="a" style="left:260px;top:383px;" width="16" height="16" viewBox="0 0 16 16"><path d="M1 6.500C3 2.500 8 1 12 3l3.500 2V16H1z" fill="#f4391f"/><path d="M10 3l5.500 2.500V16H10z" fill="#f9704a"/><path d="M4 7.500v7M7 7.500v7M12.500 8v6" stroke="#ffc9a0" stroke-width="1.400" stroke-dasharray="1.600 1.200"/></svg>
<div class="t " style="left:282px;top:381px;font-weight:400">工程管理部</div>
<div class="dh" style="left:252px;top:409px;width:8px"></div>
<svg class="a" style="left:260px;top:401px;" width="16" height="16" viewBox="0 0 16 16"><path d="M1 6.500C3 2.500 8 1 12 3l3.500 2V16H1z" fill="#f4391f"/><path d="M10 3l5.500 2.500V16H10z" fill="#f9704a"/><path d="M4 7.500v7M7 7.500v7M12.500 8v6" stroke="#ffc9a0" stroke-width="1.400" stroke-dasharray="1.600 1.200"/></svg>
<div class="t " style="left:282px;top:399px;font-weight:400">部务管理部</div>
<div class="dh" style="left:252px;top:427px;width:8px"></div>
<svg class="a" style="left:260px;top:419px;" width="16" height="16" viewBox="0 0 16 16"><path d="M1 6.500C3 2.500 8 1 12 3l3.500 2V16H1z" fill="#f4391f"/><path d="M10 3l5.500 2.500V16H10z" fill="#f9704a"/><path d="M4 7.500v7M7 7.500v7M12.500 8v6" stroke="#ffc9a0" stroke-width="1.400" stroke-dasharray="1.600 1.200"/></svg>
<div class="t " style="left:282px;top:417px;font-weight:400">财务部</div>
<div class="dl" style="left:233px;top:211px;height:137px"></div>
<div class="dl" style="left:251px;top:256px;height:81px"></div>
<div class="dl" style="left:251px;top:364px;height:63px"></div>
<div class="a" style="left:424px;top:562px;width:2px;height:2px;background:#8fa3c2"></div>
<div class="a" style="left:424px;top:566px;width:2px;height:2px;background:#8fa3c2"></div>
<div class="a" style="left:424px;top:570px;width:2px;height:2px;background:#8fa3c2"></div>
<div class="a" style="left:424px;top:574px;width:2px;height:2px;background:#8fa3c2"></div>
<div class="a" style="left:429px;top:146px;width:1322px;height:792px;background:#fff;border-top:1px solid #8ba0bc;overflow:hidden"></div>
<div class="a" style="left:429px;top:146px;width:1321px;height:792px;overflow:hidden">
<div class="hd" style="left:0px;width:50px"></div>
<div class="fc" style="left:0px;width:50px;background:linear-gradient(#e9f0fa,#d6e2f3);border-right:1px solid #9db3d3;border-bottom:1px solid #9db3d3"><svg class="a" style="left:3px;top:6px" width="8" height="10" viewBox="0 0 8 10"><circle cx="4" cy="3" r="2.600" fill="#111"/><circle cx="3.300" cy="2.300" r=".9" fill="#fff"/><path d="M4 5v4.500" stroke="#111" stroke-width="1.400"/></svg></div>
<div class="hd" style="left:50px;width:35px"><div class="a" style="left:11px;top:5px;width:12px;height:12px;border:1px solid #7f94b8;background:#fff"><div class="a" style="left:1px;top:1px;width:8px;height:8px;background:#a9c0e4;border:1px solid #8aa6d2"></div></div></div>
<div class="fc" style="left:50px;width:35px;"></div>
<div class="hd" style="left:85px;width:120px">登录名</div>
<div class="fc" style="left:85px;width:120px;"><svg class="a" style="left:4px;top:5px" width="17" height="11" viewBox="0 0 17 11"><rect x="5" y="0" width="6" height="11" fill="#3fa83f"/><text x="0" y="8.500" font-family="Liberation Mono,monospace" font-weight="700" font-size="7.500" fill="#3a62b0">A</text><text x="5.800" y="8.500" font-family="Liberation Mono,monospace" font-weight="700" font-size="7.500" fill="#fff">B</text><text x="11.500" y="8.500" font-family="Liberation Mono,monospace" font-weight="700" font-size="7.500" fill="#3a62b0">C</text></svg></div>
<div class="hd" style="left:205px;width:120px">用户名</div>
<div class="fc" style="left:205px;width:120px;"><svg class="a" style="left:4px;top:5px" width="17" height="11" viewBox="0 0 17 11"><rect x="5" y="0" width="6" height="11" fill="#3fa83f"/><text x="0" y="8.500" font-family="Liberation Mono,monospace" font-weight="700" font-size="7.500" fill="#3a62b0">A</text><text x="5.800" y="8.500" font-family="Liberation Mono,monospace" font-weight="700" font-size="7.500" fill="#fff">B</text><text x="11.500" y="8.500" font-family="Liberation Mono,monospace" font-weight="700" font-size="7.500" fill="#3a62b0">C</text></svg></div>
<div class="hd" style="left:325px;width:120px">组织/部门</div>
<div class="fc" style="left:325px;width:120px;"><svg class="a" style="left:4px;top:5px" width="17" height="11" viewBox="0 0 17 11"><rect x="5" y="0" width="6" height="11" fill="#3fa83f"/><text x="0" y="8.500" font-family="Liberation Mono,monospace" font-weight="700" font-size="7.500" fill="#3a62b0">A</text><text x="5.800" y="8.500" font-family="Liberation Mono,monospace" font-weight="700" font-size="7.500" fill="#fff">B</text><text x="11.500" y="8.500" font-family="Liberation Mono,monospace" font-weight="700" font-size="7.500" fill="#3a62b0">C</text></svg></div>
<div class="hd" style="left:445px;width:120px">默认角色</div>
<div class="fc" style="left:445px;width:120px;"><div class="a" style="left:8px;top:8px;width:9px;height:1px;background:#4a66a8"></div><div class="a" style="left:8px;top:11px;width:9px;height:1px;background:#4a66a8"></div></div>
<div class="hd" style="left:565px;width:50px">有效</div>
<div class="fc" style="left:565px;width:50px;"><div class="cb" style="left:18px;top:3px"><i></i></div></div>
<div class="hd" style="left:615px;width:50px">离职</div>
<div class="fc" style="left:615px;width:50px;"><div class="cb" style="left:18px;top:3px"><i></i></div></div>
<div class="hd" style="left:665px;width:120px">允许登录开始</div>
<div class="fc" style="left:665px;width:120px;"><div class="a" style="left:8px;top:8px;width:9px;height:1px;background:#4a66a8"></div><div class="a" style="left:8px;top:11px;width:9px;height:1px;background:#4a66a8"></div></div>
<div class="hd" style="left:785px;width:120px">允许登录结束</div>
<div class="fc" style="left:785px;width:120px;"><div class="a" style="left:8px;top:8px;width:9px;height:1px;background:#4a66a8"></div><div class="a" style="left:8px;top:11px;width:9px;height:1px;background:#4a66a8"></div></div>
<div class="hd" style="left:905px;width:130px">锁定开始</div>
<div class="fc" style="left:905px;width:130px;"><div class="a" style="left:8px;top:8px;width:9px;height:1px;background:#4a66a8"></div><div class="a" style="left:8px;top:11px;width:9px;height:1px;background:#4a66a8"></div></div>
<div class="hd" style="left:1035px;width:130px">锁定结束</div>
<div class="fc" style="left:1035px;width:130px;"><div class="a" style="left:8px;top:8px;width:9px;height:1px;background:#4a66a8"></div><div class="a" style="left:8px;top:11px;width:9px;height:1px;background:#4a66a8"></div></div>
<div class="hd" style="left:1165px;width:100px">邮箱</div>
<div class="fc" style="left:1165px;width:100px;"><svg class="a" style="left:4px;top:5px" width="17" height="11" viewBox="0 0 17 11"><rect x="5" y="0" width="6" height="11" fill="#3fa83f"/><text x="0" y="8.500" font-family="Liberation Mono,monospace" font-weight="700" font-size="7.500" fill="#3a62b0">A</text><text x="5.800" y="8.500" font-family="Liberation Mono,monospace" font-weight="700" font-size="7.500" fill="#fff">B</text><text x="11.500" y="8.500" font-family="Liberation Mono,monospace" font-weight="700" font-size="7.500" fill="#3a62b0">C</text></svg></div>
<div class="hd" style="left:1265px;width:100px">手机号码</div>
<div class="fc" style="left:1265px;width:100px;"><svg class="a" style="left:4px;top:5px" width="17" height="11" viewBox="0 0 17 11"><rect x="5" y="0" width="6" height="11" fill="#3fa83f"/><text x="0" y="8.500" font-family="Liberation Mono,monospace" font-weight="700" font-size="7.500" fill="#3a62b0">A</text><text x="5.800" y="8.500" font-family="Liberation Mono,monospace" font-weight="700" font-size="7.500" fill="#fff">B</text><text x="11.500" y="8.500" font-family="Liberation Mono,monospace" font-weight="700" font-size="7.500" fill="#3a62b0">C</text></svg></div>
<div class="a" style="left:0px;top:45px;width:1322px;height:5px;background:#e6edf8;border-bottom:1px solid #9db3d3"></div>
<div class="c l" style="left:0;top:50px;width:50px;background:linear-gradient(#e9f0fa,#d9e4f4);border-right:1px solid #9db3d3;border-bottom:1px solid #9db3d3;text-align:right;padding-right:6px;color:#1e395b;padding-top:2px">1</div>
<div class="c " style="left:50px;top:50px;width:35px;background:#fbfaf5;"><div class="cb" style="left:11px;top:3px"><i></i></div></div>
<div class="c l" style="left:85px;top:50px;width:120px;background:#fbfaf5;padding-top:1px">Administrator</div>
<div class="c " style="left:205px;top:50px;width:120px;background:#fbfaf5;font-weight:400">超级管理员</div>
<div class="c " style="left:325px;top:50px;width:120px;background:#fbfaf5;font-weight:400">技术开发部</div>
<div class="c l" style="left:445px;top:50px;width:120px;background:#fbfaf5;padding-top:1px"></div>
<div class="c " style="left:565px;top:50px;width:50px;background:#fbfaf5;"><div class="cb" style="left:18px;top:3px"><i></i><svg class="a" style="left:1px;top:0px" width="10" height="10" viewBox="0 0 10 10"><path d="M1.500 5l2.500 3 4.500-7" fill="none" stroke="#36518a" stroke-width="1.700"/></svg></div></div>
<div class="c " style="left:615px;top:50px;width:50px;background:#fbfaf5;"><div class="cb" style="left:18px;top:3px"><i></i></div></div>
<div class="c l" style="left:665px;top:50px;width:120px;background:#fbfaf5;padding-top:1px"></div>
<div class="c l" style="left:785px;top:50px;width:120px;background:#fbfaf5;padding-top:1px"></div>
<div class="c l" style="left:905px;top:50px;width:130px;background:#fbfaf5;padding-top:1px">2024-09-26</div>
<div class="c l" style="left:1035px;top:50px;width:130px;background:#fbfaf5;padding-top:1px">2024-09-26</div>
<div class="c l" style="left:1165px;top:50px;width:100px;background:#fbfaf5;padding-top:1px">406590790@...</div>
<div class="c l" style="left:1265px;top:50px;width:100px;background:#fbfaf5;padding-top:1px">1300500788</div>
<div class="c l" style="left:0;top:71px;width:50px;background:linear-gradient(#e9f0fa,#d9e4f4);border-right:1px solid #9db3d3;border-bottom:1px solid #9db3d3;text-align:right;padding-right:6px;color:#1e395b;padding-top:2px"><svg class="a" style="left:7px;top:6px" width="6" height="9" viewBox="0 0 6 9"><path d="M0 0l5 4.500L0 9z" fill="#111"/></svg>2</div>
<div class="c " style="left:50px;top:71px;width:35px;background:#dfe8f6;"><div class="cb" style="left:11px;top:3px"><i></i><svg class="a" style="left:1px;top:0px" width="10" height="10" viewBox="0 0 10 10"><path d="M1.500 5l2.500 3 4.500-7" fill="none" stroke="#36518a" stroke-width="1.700"/></svg></div></div>
<div class="c l" style="left:85px;top:71px;width:120px;background:#dfe8f6;padding-top:1px">rdiframework</div>
<div class="c l" style="left:205px;top:71px;width:120px;background:#dfe8f6;padding-top:1px">EricHu</div>
<div class="c " style="left:325px;top:71px;width:120px;background:#dfe8f6;font-weight:400">上海销售部</div>
<div class="c l" style="left:445px;top:71px;width:120px;background:#dfe8f6;padding-top:1px"></div>
<div class="c " style="left:565px;top:71px;width:50px;background:#dfe8f6;"><div class="cb" style="left:18px;top:3px"><i></i><svg class="a" style="left:1px;top:0px" width="10" height="10" viewBox="0 0 10 10"><path d="M1.500 5l2.500 3 4.500-7" fill="none" stroke="#36518a" stroke-width="1.700"/></svg></div></div>
<div class="c " style="left:615px;top:71px;width:50px;background:#dfe8f6;"><div class="cb" style="left:18px;top:3px"><i></i></div></div>
<div class="c l" style="left:665px;top:71px;width:120px;background:#dfe8f6;padding-top:1px"></div>
<div class="c l" style="left:785px;top:71px;width:120px;background:#dfe8f6;padding-top:1px"></div>
<div class="c l" style="left:905px;top:71px;width:130px;background:#dfe8f6;padding-top:1px"></div>
<div class="c l" style="left:1035px;top:71px;width:130px;background:#dfe8f6;padding-top:1px"></div>
<div class="c l" style="left:1165px;top:71px;width:100px;background:#dfe8f6;padding-top:1px">406590790@...</div>
<div class="c l" style="left:1265px;top:71px;width:100px;background:#dfe8f6;padding-top:1px">1300500788</div>
<div class="c l" style="left:0;top:92px;width:50px;background:linear-gradient(#e9f0fa,#d9e4f4);border-right:1px solid #9db3d3;border-bottom:1px solid #9db3d3;text-align:right;padding-right:6px;color:#1e395b;padding-top:2px">3</div>
<div class="c " style="left:50px;top:92px;width:35px;background:#fbfaf5;"><div class="cb" style="left:11px;top:3px"><i></i></div></div>
<div class="c l" style="left:85px;top:92px;width:120px;background:#fbfaf5;padding-top:1px">shx</div>
<div class="c " style="left:205px;top:92px;width:120px;background:#fbfaf5;font-weight:400">桑海新</div>
<div class="c " style="left:325px;top:92px;width:120px;background:#fbfaf5;font-weight:400">技术开发部</div>
<div class="c l" style="left:445px;top:92px;width:120px;background:#fbfaf5;padding-top:1px"></div>
<div class="c " style="left:565px;top:92px;width:50px;background:#fbfaf5;"><div class="cb" style="left:18px;top:3px"><i></i><svg class="a" style="left:1px;top:0px" width="10" height="10" viewBox="0 0 10 10"><path d="M1.500 5l2.500 3 4.500-7" fill="none" stroke="#36518a" stroke-width="1.700"/></svg></div></div>
<div class="c " style="left:615px;top:92px;width:50px;background:#fbfaf5;"><div class="cb" style="left:18px;top:3px"><i></i></div></div>
<div class="c l" style="left:665px;top:92px;width:120px;background:#fbfaf5;padding-top:1px">2024-07-28</div>
<div class="c l" style="left:785px;top:92px;width:120px;background:#fbfaf5;padding-top:1px"></div>
<div class="c l" style="left:905px;top:92px;width:130px;background:#fbfaf5;padding-top:1px"></div>
<div class="c l" style="left:1035px;top:92px;width:130px;background:#fbfaf5;padding-top:1px"></div>
<div class="c l" style="left:1165px;top:92px;width:100px;background:#fbfaf5;padding-top:1px"></div>
<div class="c l" style="left:1265px;top:92px;width:100px;background:#fbfaf5;padding-top:1px"></div>
<div class="c l" style="left:0;top:113px;width:50px;background:linear-gradient(#e9f0fa,#d9e4f4);border-right:1px solid #9db3d3;border-bottom:1px solid #9db3d3;text-align:right;padding-right:6px;color:#1e395b;padding-top:2px">4</div>
<div class="c " style="left:50px;top:113px;width:35px;background:#f1f4fb;"><div class="cb" style="left:11px;top:3px"><i></i></div></div>
<div class="c l" style="left:85px;top:113px;width:120px;background:#f1f4fb;padding-top:1px">yrj</div>
<div class="c " style="left:205px;top:113px;width:120px;background:#f1f4fb;font-weight:400">杨任基</div>
<div class="c " style="left:325px;top:113px;width:120px;background:#f1f4fb;font-weight:400">技术开发部</div>
<div class="c l" style="left:445px;top:113px;width:120px;background:#f1f4fb;padding-top:1px"></div>
<div class="c " style="left:565px;top:113px;width:50px;background:#f1f4fb;"><div class="cb" style="left:18px;top:3px"><i></i><svg class="a" style="left:1px;top:0px" width="10" height="10" viewBox="0 0 10 10"><path d="M1.500 5l2.500 3 4.500-7" fill="none" stroke="#36518a" stroke-width="1.700"/></svg></div></div>
<div class="c " style="left:615px;top:113px;width:50px;background:#f1f4fb;"><div class="cb" style="left:18px;top:3px"><i></i></div></div>
<div class="c l" style="left:665px;top:113px;width:120px;background:#f1f4fb;padding-top:1px"></div>
<div class="c l" style="left:785px;top:113px;width:120px;background:#f1f4fb;padding-top:1px"></div>
<div class="c l" style="left:905px;top:113px;width:130px;background:#f1f4fb;padding-top:1px"></div>
<div class="c l" style="left:1035px;top:113px;width:130px;background:#f1f4fb;padding-top:1px"></div>
<div class="c l" style="left:1165px;top:113px;width:100px;background:#f1f4fb;padding-top:1px"></div>
<div class="c l" style="left:1265px;top:113px;width:100px;background:#f1f4fb;padding-top:1px"></div>
<div class="c l" style="left:0;top:134px;width:50px;background:linear-gradient(#e9f0fa,#d9e4f4);border-right:1px solid #9db3d3;border-bottom:1px solid #9db3d3;text-align:right;padding-right:6px;color:#1e395b;padding-top:2px">5</div>
<div class="c " style="left:50px;top:134px;width:35px;background:#fbfaf5;"><div class="cb" style="left:11px;top:3px"><i></i></div></div>
<div class="c l" style="left:85px;top:134px;width:120px;background:#fbfaf5;padding-top:1px">jieyunh</div>
<div class="c " style="left:205px;top:134px;width:120px;background:#fbfaf5;font-weight:400">胡杰云</div>
<div class="c " style="left:325px;top:134px;width:120px;background:#fbfaf5;font-weight:400">技术开发部</div>
<div class="c l" style="left:445px;top:134px;width:120px;background:#fbfaf5;padding-top:1px"></div>
<div class="c " style="left:565px;top:134px;width:50px;background:#fbfaf5;"><div class="cb" style="left:18px;top:3px"><i></i><svg class="a" style="left:1px;top:0px" width="10" height="10" viewBox="0 0 10 10"><path d="M1.500 5l2.500 3 4.500-7" fill="none" stroke="#36518a" stroke-width="1.700"/></svg></div></div>
<div class="c " style="left:615px;top:134px;width:50px;background:#fbfaf5;"><div class="cb" style="left:18px;top:3px"><i></i></div></div>
<div class="c l" style="left:665px;top:134px;width:120px;background:#fbfaf5;padding-top:1px"></div>
<div class="c l" style="left:785px;top:134px;width:120px;background:#fbfaf5;padding-top:1px"></div>
<div class="c l" style="left:905px;top:134px;width:130px;background:#fbfaf5;padding-top:1px"></div>
<div class="c l" style="left:1035px;top:134px;width:130px;background:#fbfaf5;padding-top:1px"></div>
<div class="c l" style="left:1165px;top:134px;width:100px;background:#fbfaf5;padding-top:1px">406590790@...</div>
<div class="c l" style="left:1265px;top:134px;width:100px;background:#fbfaf5;padding-top:1px">1300500788</div>
<div class="c l" style="left:0;top:155px;width:50px;background:linear-gradient(#e9f0fa,#d9e4f4);border-right:1px solid #9db3d3;border-bottom:1px solid #9db3d3;text-align:right;padding-right:6px;color:#1e395b;padding-top:2px">6</div>
<div class="c " style="left:50px;top:155px;width:35px;background:#f1f4fb;"><div class="cb" style="left:11px;top:3px"><i></i></div></div>
<div class="c l" style="left:85px;top:155px;width:120px;background:#f1f4fb;padding-top:1px">10172</div>
<div class="c " style="left:205px;top:155px;width:120px;background:#f1f4fb;font-weight:400">刘蕾</div>
<div class="c " style="left:325px;top:155px;width:120px;background:#f1f4fb;font-weight:400">技术开发部</div>
<div class="c l" style="left:445px;top:155px;width:120px;background:#f1f4fb;padding-top:1px"></div>
<div class="c " style="left:565px;top:155px;width:50px;background:#f1f4fb;"><div class="cb" style="left:18px;top:3px"><i></i><svg class="a" style="left:1px;top:0px" width="10" height="10" viewBox="0 0 10 10"><path d="M1.500 5l2.500 3 4.500-7" fill="none" stroke="#36518a" stroke-width="1.700"/></svg></div></div>
<div class="c " style="left:615px;top:155px;width:50px;background:#f1f4fb;"><div class="cb" style="left:18px;top:3px"><i></i></div></div>
<div class="c l" style="left:665px;top:155px;width:120px;background:#f1f4fb;padding-top:1px"></div>
<div class="c l" style="left:785px;top:155px;width:120px;background:#f1f4fb;padding-top:1px"></div>
<div class="c l" style="left:905px;top:155px;width:130px;background:#f1f4fb;padding-top:1px"></div>
<div class="c l" style="left:1035px;top:155px;width:130px;background:#f1f4fb;padding-top:1px"></div>
<div class="c l" style="left:1165px;top:155px;width:100px;background:#f1f4fb;padding-top:1px">8154430005...</div>
<div class="c l" style="left:1265px;top:155px;width:100px;background:#f1f4fb;padding-top:1px">1862821188</div>
<div class="c l" style="left:0;top:176px;width:50px;background:linear-gradient(#e9f0fa,#d9e4f4);border-right:1px solid #9db3d3;border-bottom:1px solid #9db3d3;text-align:right;padding-right:6px;color:#1e395b;padding-top:2px">7</div>
<div class="c " style="left:50px;top:176px;width:35px;background:#fbfaf5;"><div class="cb" style="left:11px;top:3px"><i></i></div></div>
<div class="c l" style="left:85px;top:176px;width:120px;background:#fbfaf5;padding-top:1px">10173</div>
<div class="c l" style="left:205px;top:176px;width:120px;background:#fbfaf5;padding-top:1px"></div>
<div class="c l" style="left:325px;top:176px;width:120px;background:#fbfaf5;padding-top:1px"></div>
<div class="c l" style="left:445px;top:176px;width:120px;background:#fbfaf5;padding-top:1px"></div>
<div class="c " style="left:565px;top:176px;width:50px;background:#fbfaf5;"><div class="cb" style="left:18px;top:3px"><i></i><svg class="a" style="left:1px;top:0px" width="10" height="10" viewBox="0 0 10 10"><path d="M1.500 5l2.500 3 4.500-7" fill="none" stroke="#36518a" stroke-width="1.700"/></svg></div></div>
<div class="c " style="left:615px;top:176px;width:50px;background:#fbfaf5;"><div class="cb" style="left:18px;top:3px"><i></i></div></div>
<div class="c l" style="left:665px;top:176px;width:120px;background:#fbfaf5;padding-top:1px"></div>
<div class="c l" style="left:785px;top:176px;width:120px;background:#fbfaf5;padding-top:1px"></div>
<div class="c l" style="left:905px;top:176px;width:130px;background:#fbfaf5;padding-top:1px"></div>
<div class="c l" style="left:1035px;top:176px;width:130px;background:#fbfaf5;padding-top:1px"></div>
<div class="c l" style="left:1165px;top:176px;width:100px;background:#fbfaf5;padding-top:1px">8253047375...</div>
<div class="c l" style="left:1265px;top:176px;width:100px;background:#fbfaf5;padding-top:1px">1370177866</div>
<div class="c l" style="left:0;top:197px;width:50px;background:linear-gradient(#e9f0fa,#d9e4f4);border-right:1px solid #9db3d3;border-bottom:1px solid #9db3d3;text-align:right;padding-right:6px;color:#1e395b;padding-top:2px">8</div>
<div class="c " style="left:50px;top:197px;width:35px;background:#f1f4fb;"><div class="cb" style="left:11px;top:3px"><i></i></div></div>
<div class="c l" style="left:85px;top:197px;width:120px;background:#f1f4fb;padding-top:1px">10174</div>
<div class="c l" style="left:205px;top:197px;width:120px;background:#f1f4fb;padding-top:1px"></div>
<div class="c l" style="left:325px;top:197px;width:120px;background:#f1f4fb;padding-top:1px"></div>
<div class="c l" style="left:445px;top:197px;width:120px;background:#f1f4fb;padding-top:1px"></div>
<div class="c " style="left:565px;top:197px;width:50px;background:#f1f4fb;"><div class="cb" style="left:18px;top:3px"><i></i><svg class="a" style="left:1px;top:0px" width="10" height="10" viewBox="0 0 10 10"><path d="M1.500 5l2.500 3 4.500-7" fill="none" stroke="#36518a" stroke-width="1.700"/></svg></div></div>
<div class="c " style="left:615px;top:197px;width:50px;background:#f1f4fb;"><div class="cb" style="left:18px;top:3px"><i></i></div></div>
<div class="c l" style="left:665px;top:197px;width:120px;background:#f1f4fb;padding-top:1px"></div>
<div class="c l" style="left:785px;top:197px;width:120px;background:#f1f4fb;padding-top:1px"></div>
<div class="c l" style="left:905px;top:197px;width:130px;background:#f1f4fb;padding-top:1px"></div>
<div class="c l" style="left:1035px;top:197px;width:130px;background:#f1f4fb;padding-top:1px"></div>
<div class="c l" style="left:1165px;top:197px;width:100px;background:#f1f4fb;padding-top:1px">7704252230...</div>
<div class="c l" style="left:1265px;top:197px;width:100px;background:#f1f4fb;padding-top:1px">1872102255</div>
<div class="a" style="left:50px;top:91px;width:1272px;height:2px;background:#ffff00"></div>
</div>
<div class="a" style="left:1750px;top:146px;width:2px;height:846px;background:#8ba0bc;width:1px"></div>
<div class="a" style="left:428px;top:146px;width:1px;height:847px;background:#8ba0bc"></div>
<div class="a" style="left:429px;top:938px;width:1322px;height:20px;background:linear-gradient(#e4ecf8,#d0dcee);border-bottom:1px solid #8ba0bc"></div>
<div class="a" style="left:429px;top:938px;width:140px;height:19px;background:#fff"></div>
<div class="a" style="left:430px;top:938px;width:14px;height:19px;background:linear-gradient(#d9d9e8,#a9a9c3)"></div>
<svg class="a" style="left:430px;top:938px;" width="14" height="19" viewBox="0 0 14 19"><path d="M3 5v8" stroke="#4a5078" stroke-width="1.400"/><path d="M8 5v8L4 9zM12.500 5v8L8.500 9z" fill="#4a5078"/></svg>
<div class="a" style="left:446px;top:938px;width:14px;height:19px;background:linear-gradient(#d9d9e8,#a9a9c3)"></div>
<svg class="a" style="left:446px;top:938px;" width="14" height="19" viewBox="0 0 14 19"><path d="M9 5v8L4.500 9z" fill="#4a5078"/></svg>
<div class="t " style="left:467px;top:937px;font-weight:400">记录 <span class="l">2 of 8</span></div>
<div class="a" style="left:540px;top:938px;width:13px;height:19px;background:linear-gradient(#d9d9e8,#a9a9c3)"></div>
<svg class="a" style="left:540px;top:938px;" width="13" height="19" viewBox="0 0 13 19"><path d="M5 5v8l4.500-4z" fill="#4a5078"/></svg>
<div class="a" style="left:555px;top:938px;width:13px;height:19px;background:linear-gradient(#d9d9e8,#a9a9c3)"></div>
<svg class="a" style="left:555px;top:938px;" width="13" height="19" viewBox="0 0 13 19"><path d="M11 5v8" stroke="#4a5078" stroke-width="1.400"/><path d="M1.500 5v8l4-4zM6 5v8l4-4z" fill="#4a5078"/></svg>
<svg class="a" style="left:574px;top:943px;" width="6" height="10" viewBox="0 0 6 10"><path d="M5 0v9L0 4.500z" fill="#3a4a6a"/></svg>
<div class="a" style="left:586px;top:940px;width:911px;height:15px;border:1px solid #b4c6e0;border-radius:2px;background:linear-gradient(#eef3fb,#d9e4f4)"></div>
<div class="a" style="left:1037px;top:944px;width:1px;height:7px;background:#8fa3c2"></div>
<div class="a" style="left:1039px;top:944px;width:1px;height:7px;background:#8fa3c2"></div>
<div class="a" style="left:1041px;top:944px;width:1px;height:7px;background:#8fa3c2"></div>
<div class="a" style="left:1043px;top:944px;width:1px;height:7px;background:#8fa3c2"></div>
<svg class="a" style="left:1736px;top:942px;" width="7" height="11" viewBox="0 0 7 11"><path d="M0 0v10l6-5z" fill="#1a2a4a"/></svg>
<div class="a" style="left:428px;top:959px;width:1323px;height:34px;background:#d0dcec;border-bottom:2px solid #8ba0bc;border-left:1px solid #8ba0bc"></div>
<div class="t nv" style="left:983px;top:965px;font-weight:400;font-family:'Liberation Serif','Noto Sans CJK SC',serif">共 8 条记录，每页 50 条，共 1 页 耗时：0毫秒</div>
<div class="a" style="left:1290px;top:965px;width:123px;height:22px;border:1px solid #9fb4d2;background:#fff"></div>
<div class="a" style="left:1396px;top:966px;width:16px;height:20px;border-left:1px solid #9fb4d2;background:linear-gradient(#e9f0fa,#d3dff0)"></div>
<svg class="a" style="left:1400px;top:973px;" width="9" height="6" viewBox="0 0 9 6"><path d="M0 0h8L4 4.500z" fill="#4a5e80"/></svg>
<div class="t " style="left:1294px;top:966px;"><span class="l">50</span></div>
<div class="a" style="left:1417px;top:965px;width:51px;height:23px;border:1px solid #bccbe2;border-radius:3px;background:linear-gradient(#dce6f4,#cfdbec);color:#8c9bb4;text-align:center;line-height:21px;font-size:13px;font-weight:400">|&lt;</div>
<div class="a" style="left:1472px;top:965px;width:54px;height:23px;border:1px solid #bccbe2;border-radius:3px;background:linear-gradient(#dce6f4,#cfdbec);color:#8c9bb4;text-align:center;line-height:21px;font-size:13px;font-weight:400">&lt;</div>
<div class="a" style="left:1530px;top:966px;width:91px;height:20px;border:1px solid #c5d3e8;border-bottom:1px solid #7a7a7a;background:#fff"></div>
<div class="t " style="left:1533px;top:965px;"><span style="font-family:'Liberation Serif',serif;font-size:12px">1</span></div>
<div class="a" style="left:1625px;top:965px;width:48px;height:23px;border:1px solid #bccbe2;border-radius:3px;background:linear-gradient(#dce6f4,#cfdbec);color:#8c9bb4;text-align:center;line-height:21px;font-size:13px;font-weight:400">&gt;</div>
<div class="a" style="left:1676px;top:965px;width:51px;height:23px;border:1px solid #bccbe2;border-radius:3px;background:linear-gradient(#dce6f4,#cfdbec);color:#8c9bb4;text-align:center;line-height:21px;font-size:13px;font-weight:400">&gt;|</div>
<div class="a" style="left:1728px;top:961px;width:18px;height:30px;background:#dbe5f3"></div>
<svg class="a" style="left:1731px;top:965px;" width="12" height="22" viewBox="0 0 12 22"><path d="M5.500 1l4.500 6H1zM5.500 20l4.500-6H1z" fill="#2a3a5a"/></svg>
<div class="a" style="left:563px;top:316px;width:473px;height:467px;border:1px solid #8593a8;box-shadow:inset 0 1px 0 #dbe6f5;background:linear-gradient(#c9d9ee 0,#bccfe8 28px,#bfd1e9 100%)"></div>
<svg class="a" style="left:573px;top:325px;" width="16.4" height="16.4" viewBox="0 0 16 16"><defs><linearGradient id="rg573325" x1="0" y1="0" x2="1" y2="1"><stop offset="0" stop-color="#0058b0"/><stop offset=".55" stop-color="#0a78d8"/><stop offset="1" stop-color="#2aa8ff"/></linearGradient></defs><circle cx="8" cy="8" r="7.6" fill="url(#rg573325)"/><text x="8.2" y="12.4" font-family="Liberation Sans,sans-serif" font-weight="700" font-size="12" fill="#fff" stroke="#fff" stroke-width=".5" text-anchor="middle">R</text></svg>
<div class="t nv" style="left:594px;top:323px;font-weight:400">用户登录时间控制</div>
<svg class="a" style="left:1007px;top:327px;" width="16" height="14" viewBox="0 0 16 14"><path d="M3.900 3.800l6.800 5.600M10.700 3.800l-6.800 5.600" stroke="#2c3648" stroke-width="3.900" stroke-linecap="round"/><path d="M3.900 3.800l6.800 5.600M10.700 3.800l-6.800 5.600" stroke="#fff" stroke-width="2" stroke-linecap="round"/></svg>
<div class="a" style="left:570px;top:345px;width:459px;height:430px;border:1px solid #7d99c0;background:#f0f0f0"></div>
<div class="a" style="left:574px;top:352px;width:449px;height:266px;border:1px solid #7f9bc2;border-radius:2px;background:#d0ddee"></div>
<div class="a" style="left:575px;top:353px;width:447px;height:19px;background:linear-gradient(#dbe7f7,#c5d7ef)"></div>
<div class="t nv" style="left:587px;top:351px;font-weight:400">用户信息</div>
<div class="a" style="left:576px;top:373px;width:445px;height:239px;border:1px solid #8aa4c8;border-radius:2px;background:#d0ddee"></div>
<div class="lab" style="left:580px;width:121.5px;top:382px;font-weight:400;font-size:14px;color:#000">登录用户名：</div>
<div class="a" style="left:717px;top:380px;width:296px;height:22px;"></div>
<div class="inp l" style="left:717px;top:380px;width:296px;height:22px">rdiframework</div>
<div class="lab" style="left:580px;width:121.5px;top:413px;font-weight:400;font-size:14px;color:#000">姓名：</div>
<div class="inp l" style="left:717px;top:412px;width:296px;height:22px">EricHu</div>
<div class="lab" style="left:580px;width:123px;top:445px;font-weight:400;font-size:15px;color:#8b93a0">职位：</div>
<div class="inp" style="left:717px;top:444px;width:296px;height:22px;font-weight:400">总经理</div>
<div class="lab" style="left:580px;width:123px;top:476px;font-weight:400;font-size:15px;color:#8b93a0">职称：</div>
<div class="inp" style="left:717px;top:474px;width:296px;height:22px"></div>
<div class="lab" style="left:580px;width:123px;top:508px;font-weight:400;font-size:15px;color:#8b93a0">默认角色：</div>
<div class="inp" style="left:718px;top:504px;width:295px;height:24px;font-weight:400;line-height:22px">总裁</div>
<div class="a" style="left:996px;top:505px;width:16px;height:22px;border-left:1px solid #b9c8de;background:#f0f0f0"></div>
<svg class="a" style="left:1000px;top:514px;" width="8" height="5" viewBox="0 0 8 5"><path d="M0 0h7L3.500 4z" fill="#a9b2c0"/></svg>
<div class="lab" style="left:580px;width:121px;top:542px;font-weight:400;font-size:14px;color:#000">所属公司、单<span style="letter-spacing:3px">...</span></div>
<div class="inp" style="left:717px;top:542px;width:294px;height:22px;font-weight:400">国思软件</div>
<div class="a" style="left:978px;top:543px;width:16px;height:20px;border-left:1px solid #b9c8de;background:#f0f0f0"></div>
<svg class="a" style="left:982px;top:551px;" width="8" height="5" viewBox="0 0 8 5"><path d="M0 0h7L3.500 4z" fill="#a9b2c0"/></svg>
<div class="a" style="left:994px;top:543px;width:16px;height:20px;border-left:1px solid #b9c8de;background:#f0f0f0"></div>
<svg class="a" style="left:998px;top:548px;" width="9" height="9" viewBox="0 0 9 9"><path d="M1.500 1.500l6 6M7.500 1.500l-6 6" stroke="#a9b2c0" stroke-width="1.500"/></svg>
<div class="lab" style="left:580px;width:121.5px;top:580px;font-weight:400;font-size:14px;color:#000">所在部门：</div>
<div class="inp" style="left:718px;top:575px;width:295px;height:22px;font-weight:400">上海销售部</div>
<div class="a" style="left:980px;top:576px;width:16px;height:20px;border-left:1px solid #b9c8de;background:#f0f0f0"></div>
<svg class="a" style="left:984px;top:584px;" width="8" height="5" viewBox="0 0 8 5"><path d="M0 0h7L3.500 4z" fill="#a9b2c0"/></svg>
<div class="a" style="left:996px;top:576px;width:16px;height:20px;border-left:1px solid #b9c8de;background:#f0f0f0"></div>
<svg class="a" style="left:1000px;top:581px;" width="9" height="9" viewBox="0 0 9 9"><path d="M1.500 1.500l6 6M7.500 1.500l-6 6" stroke="#a9b2c0" stroke-width="1.500"/></svg>
<div class="t " style="left:599px;top:640px;font-weight:400;font-size:14px">允许登录开始：</div>
<div class="a" style="left:717px;top:636px;width:168px;height:23px;border:1px solid #0a64c8;border-radius:2px;background:#fff"></div>
<div class="t " style="left:599px;top:687px;font-weight:400;font-size:14px">允许登录结束：</div>
<div class="a" style="left:717px;top:684px;width:168px;height:23px;border:1px solid #7a7a7a;border-radius:2px;background:#fff"></div>
<svg class="a" style="left:722px;top:641px;" width="13" height="13" viewBox="0 0 13 13"><rect x=".5" y=".5" width="12" height="12" rx="2" fill="#0a5cc0"/><path d="M3 6.500l2.500 2.500 4.500-5" fill="none" stroke="#fff" stroke-width="1.300"/></svg>
<div class="t " style="left:739px;top:637px;"><span class="l">2024-10-18</span></div>
<svg class="a" style="left:857px;top:641px;" width="12" height="13" viewBox="0 0 12 13"><rect x="1.500" y="1.500" width="9" height="10" rx="1" fill="#e8e8e8" stroke="#606060"/><rect x="3" y="3.500" width="6" height="6.500" fill="#b0b0b0"/><path d="M1.500 1.500h9" stroke="#404040" stroke-width="1.400"/></svg>
<svg class="a" style="left:870px;top:645px;" width="9" height="6" viewBox="0 0 9 6"><path d="M0 0h8L4 4.500z" fill="#2a3a6a"/></svg>
<svg class="a" style="left:722px;top:689px;" width="13" height="13" viewBox="0 0 13 13"><rect x=".5" y=".5" width="12" height="12" rx="2" fill="#0a5cc0"/><path d="M3 6.500l2.500 2.500 4.500-5" fill="none" stroke="#fff" stroke-width="1.300"/></svg>
<div class="t " style="left:739px;top:685px;"><span class="l">2024-10-19</span></div>
<svg class="a" style="left:857px;top:689px;" width="12" height="13" viewBox="0 0 12 13"><rect x="1.500" y="1.500" width="9" height="10" rx="1" fill="#e8e8e8" stroke="#606060"/><rect x="3" y="3.500" width="6" height="6.500" fill="#b0b0b0"/><path d="M1.500 1.500h9" stroke="#404040" stroke-width="1.400"/></svg>
<svg class="a" style="left:870px;top:693px;" width="9" height="6" viewBox="0 0 9 6"><path d="M0 0h8L4 4.500z" fill="#2a3a6a"/></svg>
<div class="btn" style="left:841px;top:737px;width:75px;height:26px;line-height:24px;font-weight:400">确定</div>
<div class="btn" style="left:929px;top:737px;width:75px;height:26px;line-height:24px;font-weight:400">取消</div>
<div class="a" style="left:1025px;top:768px;width:2px;height:2px;background:#8fa3c2"></div>
<div class="a" style="left:1022px;top:771px;width:2px;height:2px;background:#8fa3c2"></div>
<div class="a" style="left:1025px;top:771px;width:2px;height:2px;background:#8fa3c2"></div>
<div class="a" style="left:1019px;top:771px;width:2px;height:2px;background:#8fa3c2"></div>
<div class="a" style="left:1022px;top:768px;width:2px;height:2px;background:#8fa3c2"></div>
<div class="a" style="left:1025px;top:765px;width:2px;height:2px;background:#8fa3c2"></div>
</body></html>
